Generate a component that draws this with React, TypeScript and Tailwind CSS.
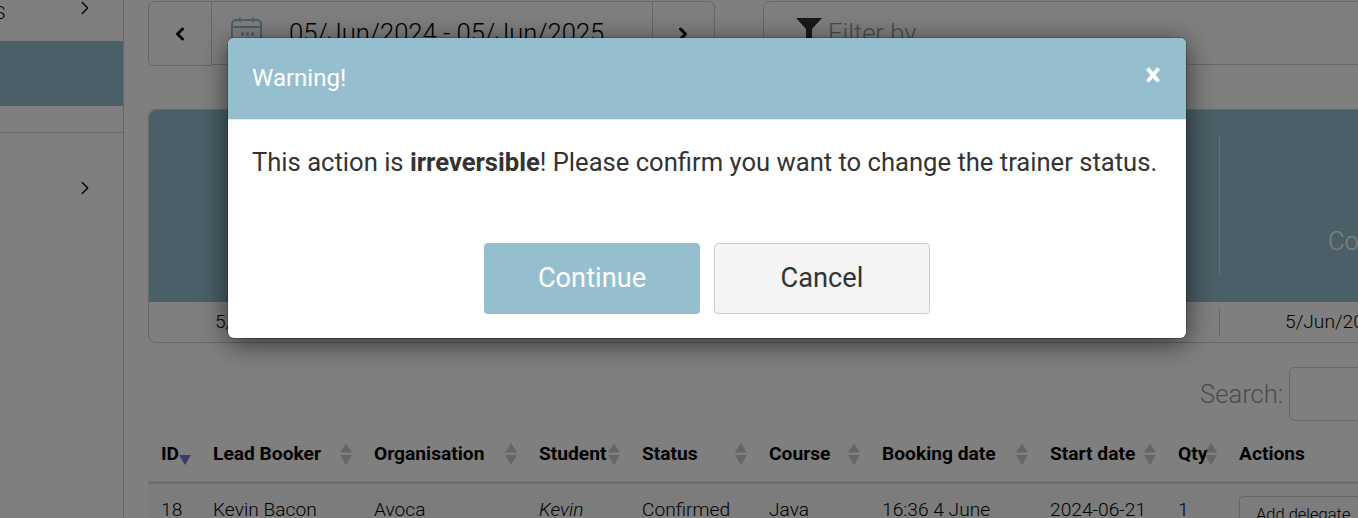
import { ChevronRight, ChevronLeft } from "lucide-react";

const font = { fontFamily: "Roboto, sans-serif" };

const columns = [
  { label: "ID", cell: "18", width: "w-[52px]", active: true },
  { label: "Lead Booker", cell: "Kevin Bacon", width: "w-[161px]" },
  { label: "Organisation", cell: "Avoca", width: "w-[165px]" },
  { label: "Student", cell: "Kevin", width: "w-[103px]", italic: true },
  { label: "Status", cell: "Confirmed", width: "w-[127px]" },
  { label: "Course", cell: "Java", width: "w-[113px]" },
  { label: "Booking date", cell: "16:36 4 June", width: "w-[168px]" },
  { label: "Start date", cell: "2024-06-21", width: "w-[128px]" },
  { label: "Qty", cell: "1", width: "w-[61px]" },
];

const SortIcon: React.FC<{ active?: boolean }> = ({ active }) => (
  <svg width="14" height="24" viewBox="0 0 14 24" className="absolute right-[21px] top-[2px]">
    <path d="M7 1 L13 10.5 L1 10.5 Z" fill={active ? "none" : "#000"} fillOpacity="0.2" />
    <path d="M7 23 L13 13 L1 13 Z" fill={active ? "#7674d6" : "#000"} fillOpacity={active ? 1 : 0.2} />
  </svg>
);

const App: React.FC = () => {
  return (
    <div className="relative h-[518px] w-[1358px] overflow-hidden bg-white text-black" style={font}>
      <div className="flex h-full">
        {/* sidebar */}
        <div className="w-[124px] shrink-0 border-r border-[#ccc]">
          <div className="flex h-[41px] items-start justify-between pr-[27px]">
            <span className="-ml-[6px] text-[19px] leading-[26px] font-light">S</span>
            <ChevronRight size={22} strokeWidth={1.5} className="-mt-[3px]" />
          </div>
          <div className="h-[65px] bg-[#95bfcf]" />
          <div className="flex h-[27px] border-b border-[#ccc]" />
          <div className="flex justify-end pr-[27px] pt-[44px]">
            <ChevronRight size={22} strokeWidth={1.5} />
          </div>
        </div>

        {/* main */}
        <div className="min-w-0 flex-1 pl-6">
          <div className="mt-px flex w-[1400px] gap-12">
            <div className="flex h-[65px] w-[567px] text-[25.6px] font-light">
              <div className="flex w-[64px] items-center justify-center rounded-l-md border border-[#ccc]">
                <ChevronLeft size={20} strokeWidth={3.6} />
              </div>
              <div className="flex h-[64px] w-[440px] items-center border-y border-[#ccc] pl-[18px]">
                <svg width="32" height="34" viewBox="0 0 32 34" fill="none" stroke="#95bfcf" strokeWidth="2" className="mr-[27px] mt-[2px]">
                  <rect x="2" y="3" width="29" height="29" rx="4" />
                  <path d="M2 10 H31 M10 0.5 V5 M23 0.5 V5" />
                  <path d="M11 17 H25" strokeWidth="3" strokeDasharray="3 2" />
                </svg>
                <span>05/Jun/2024 - 05/Jun/2025</span>
              </div>
              <div className="flex w-[63px] items-center justify-center rounded-r-md border border-[#ccc] pr-[2px]">
                <ChevronRight size={20} strokeWidth={3.6} />
              </div>
            </div>
            <div className="flex h-[64px] flex-1 items-center rounded-l-md border border-[#ccc] pl-[32px] text-[25.6px] font-light text-[#999]">
              <svg width="26" height="26" viewBox="0 0 26 26" className="mr-[6px] -mt-[6px]">
                <path d="M0 1 H26 L16 12 V25 H10 V12 Z" fill="#333" />
              </svg>
              <span>Filter by</span>
            </div>
          </div>

          {/* totals panel */}
          <div className="mt-[43px] w-[1400px] rounded-lg border border-[#ccc]">
            <div className="grid h-[192px] grid-cols-[repeat(5,214px)_1fr] rounded-t-lg bg-[#95bfcf] pt-[26px]">
              <div />
              <div />
              <div />
              <div />
              <div />
              <div className="h-[139px] border-l border-[#cfe0e7] pl-[108px] pt-[90px] text-[25.6px] font-light leading-[30px] text-white">
                Completed
              </div>
            </div>
            <div className="grid h-[40px] grid-cols-[repeat(5,214px)_1fr] items-center text-[19.2px] font-light">
              <div className="pl-[66px]">5/Jun/2024</div>
              <div />
              <div />
              <div />
              <div />
              <div className="flex h-[28px] items-center border-l border-[#ccc] pl-[65px]">5/Jun/2025</div>
            </div>
          </div>

          {/* search */}
          <div className="mt-[24px] flex h-[54px] items-center pl-[1052px] text-[25.6px] font-light text-[#999]">
            <span>Search:</span>
            <div className="ml-[6px] h-[54px] w-[200px] shrink-0 rounded-md border border-[#ccc]" />
          </div>

          {/* bookings table */}
          <div className="mt-[19px] flex w-[1400px] border-b-[3px] border-[#ddd] pb-[13px] pl-[13px] text-[19.2px] font-bold leading-[28px]">
            {columns.map((c) => (
              <div key={c.label} className={`relative shrink-0 ${c.width}`}>
                {c.label}
                <SortIcon active={c.active} />
              </div>
            ))}
            <div>Actions</div>
          </div>
          <div className="flex w-[1400px] bg-[#f9f9f9] pl-[13px] pt-[12px] text-[19.2px] font-light leading-[28px]">
            {columns.map((c) => (
              <div key={c.label} className={`shrink-0 ${c.width} ${c.italic ? "italic" : ""}`}>
                {c.cell}
              </div>
            ))}
            <div className="rounded border border-[#ccc] px-[16px] pt-[6px] text-[16.5px] leading-[24px]">Add delegate</div>
          </div>
        </div>
      </div>

      {/* backdrop + modal */}
      <div className="absolute inset-0 bg-black/50" />
      <div className="absolute left-[228px] top-[38px] w-[958px] overflow-hidden rounded-md bg-white shadow-[0_0_0_1px_rgba(0,0,0,0.2),0_5px_28px_rgba(0,0,0,0.6)]">
        <div className="relative h-[82px] border-b border-[#e5e5e5] bg-[#95bfcf] pl-[24px] pt-[22px] text-[24px] leading-[36px] text-white">
          Warning!
          <svg width="16" height="18" viewBox="0 0 16 18" className="absolute left-[917px] top-[28px]">
            <path d="M2.5 2.5 L13.5 15.5 M13.5 2.5 L2.5 15.5" stroke="#fff" strokeWidth="3.8" fill="none" />
          </svg>
        </div>
        <div className="px-[24px] pt-[24px] text-[25.6px] leading-[36px] text-[#333]">
          This action is <b className="font-bold">irreversible</b>! Please confirm you want to change the trainer status.
        </div>
        <div className="mt-[63px] flex justify-center gap-[14px] pb-[24px] text-[27.2px] leading-[36px]">
          <button className="h-[71px] w-[216px] rounded bg-[#95bfcf] pb-[2px] text-white">Continue</button>
          <button className="h-[71px] w-[216px] rounded border border-[#ccc] bg-[#f4f4f4] pb-[2px] text-[#333]">Cancel</button>
        </div>
      </div>
    </div>
  );
};

export default App;
